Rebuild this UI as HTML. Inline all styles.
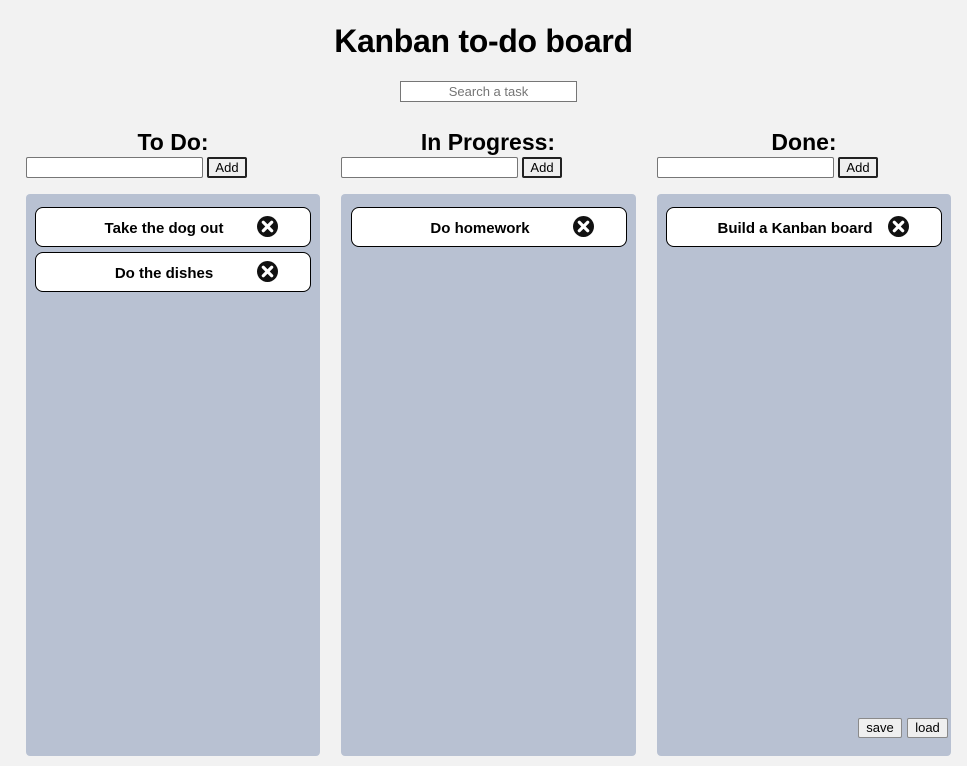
<!DOCTYPE html>
<html><head><style>
*{box-sizing:border-box;margin:0;padding:0}
body{width:967px;height:766px;background:#f2f2f2;font-family:"Liberation Sans",sans-serif;position:relative;overflow:hidden}
.abs{position:absolute}
h1{position:absolute;left:0;width:967px;top:21px;text-align:center;font-size:32px;font-weight:bold;line-height:40px;letter-spacing:-0.3px}
.search{left:400px;top:81px;width:177px;height:21px;border:1px solid #767676;background:#fff;color:#757575;font-size:13px;text-align:center;line-height:19px}
.h2{width:294px;text-align:center;font-size:23px;font-weight:bold;top:128px;line-height:28px}
.inp{width:177px;height:21px;top:157px;border:1px solid #767676;background:#fff;border-radius:2px}
.btn{top:157px;width:40px;height:21px;border:2px solid #222;background:#efefef;font-size:13px;text-align:center;line-height:17px;border-radius:2px}
.col{top:194px;width:295px;height:562px;background:#b8c1d2;border-radius:4px}
.card{left:9px;width:276px;height:40px;background:#fff;border:1px solid #000;border-radius:8px;font-weight:bold;font-size:15px;line-height:41px}
.card span{position:absolute;left:0;width:256px;text-align:center}
.card svg{position:absolute;left:221px;top:8px}
.sb{top:718px;height:20px;border:1px solid #8a8a8a;background:#efefef;font-size:13px;text-align:center;line-height:18px;border-radius:2px}
</style></head><body>
<h1>Kanban to-do board</h1>
<div class="abs search">Search a task</div>

<div class="abs h2" style="left:26px">To Do:</div>
<div class="abs inp" style="left:26px"></div><div class="abs btn" style="left:207px">Add</div>
<div class="abs h2" style="left:341px">In Progress:</div>
<div class="abs inp" style="left:341px"></div><div class="abs btn" style="left:522px">Add</div>
<div class="abs h2" style="left:657px">Done:</div>
<div class="abs inp" style="left:657px"></div><div class="abs btn" style="left:838px">Add</div>

<div class="abs col" style="left:26px;width:294px">
 <div class="abs card" style="top:13px"><span>Take the dog out</span><svg width="21" height="21" viewBox="0 0 20 20"><circle cx="10" cy="10" r="10" fill="#111"/><path d="M6 6L14 14M14 6L6 14" stroke="#fff" stroke-width="3" stroke-linecap="round"/></svg></div>
 <div class="abs card" style="top:58px"><span>Do the dishes</span><svg width="21" height="21" viewBox="0 0 20 20"><circle cx="10" cy="10" r="10" fill="#111"/><path d="M6 6L14 14M14 6L6 14" stroke="#fff" stroke-width="3" stroke-linecap="round"/></svg></div>
</div>
<div class="abs col" style="left:341px">
 <div class="abs card" style="top:13px;left:10px"><span>Do homework</span><svg width="21" height="21" viewBox="0 0 20 20"><circle cx="10" cy="10" r="10" fill="#111"/><path d="M6 6L14 14M14 6L6 14" stroke="#fff" stroke-width="3" stroke-linecap="round"/></svg></div>
</div>
<div class="abs col" style="left:657px;width:294px">
 <div class="abs card" style="top:13px"><span>Build a Kanban board</span><svg width="21" height="21" viewBox="0 0 20 20"><circle cx="10" cy="10" r="10" fill="#111"/><path d="M6 6L14 14M14 6L6 14" stroke="#fff" stroke-width="3" stroke-linecap="round"/></svg></div>
</div>
<div class="abs sb" style="left:858px;width:44px">save</div>
<div class="abs sb" style="left:907px;width:41px">load</div>
</body></html>
